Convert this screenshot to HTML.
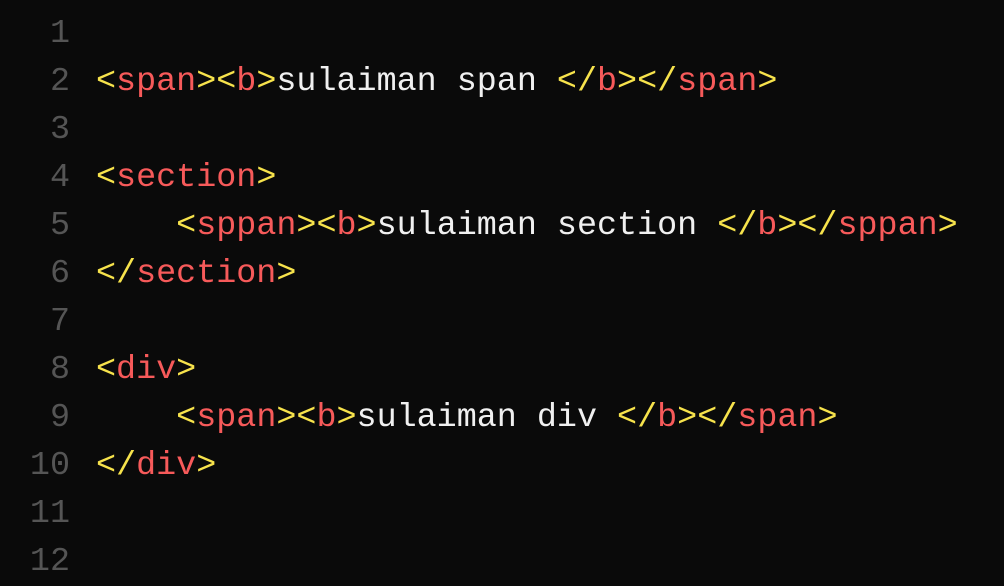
<!DOCTYPE html>
<html><head><meta charset="utf-8"><style>
html,body{margin:0;padding:0;background:#0a0a0a;width:1004px;height:584px;overflow:hidden}
.c{position:absolute;top:10px;left:0;font-family:"Liberation Mono",monospace;font-size:33.4px;line-height:48px;color:#f0f0f0}
.l{height:48px;position:relative}
.n{position:absolute;left:0;width:70px;color:#555;text-align:right}
.t{position:absolute;left:96px;white-space:pre}
.y{color:#f7e34c}.r{color:#f75a5a}
</style></head><body><div class="c">
<div class="l"><span class="n">1</span></div>
<div class="l"><span class="n">2</span><span class="t"><span class="y">&lt;</span><span class="r">span</span><span class="y">&gt;&lt;</span><span class="r">b</span><span class="y">&gt;</span>sulaiman span <span class="y">&lt;/</span><span class="r">b</span><span class="y">&gt;&lt;/</span><span class="r">span</span><span class="y">&gt;</span></span></div>
<div class="l"><span class="n">3</span></div>
<div class="l"><span class="n">4</span><span class="t"><span class="y">&lt;</span><span class="r">section</span><span class="y">&gt;</span></span></div>
<div class="l"><span class="n">5</span><span class="t">    <span class="y">&lt;</span><span class="r">sppan</span><span class="y">&gt;&lt;</span><span class="r">b</span><span class="y">&gt;</span>sulaiman section <span class="y">&lt;/</span><span class="r">b</span><span class="y">&gt;&lt;/</span><span class="r">sppan</span><span class="y">&gt;</span></span></div>
<div class="l"><span class="n">6</span><span class="t"><span class="y">&lt;/</span><span class="r">section</span><span class="y">&gt;</span></span></div>
<div class="l"><span class="n">7</span></div>
<div class="l"><span class="n">8</span><span class="t"><span class="y">&lt;</span><span class="r">div</span><span class="y">&gt;</span></span></div>
<div class="l"><span class="n">9</span><span class="t">    <span class="y">&lt;</span><span class="r">span</span><span class="y">&gt;&lt;</span><span class="r">b</span><span class="y">&gt;</span>sulaiman div <span class="y">&lt;/</span><span class="r">b</span><span class="y">&gt;&lt;/</span><span class="r">span</span><span class="y">&gt;</span></span></div>
<div class="l"><span class="n">10</span><span class="t"><span class="y">&lt;/</span><span class="r">div</span><span class="y">&gt;</span></span></div>
<div class="l"><span class="n">11</span></div>
<div class="l"><span class="n">12</span></div>
</div></body></html>
